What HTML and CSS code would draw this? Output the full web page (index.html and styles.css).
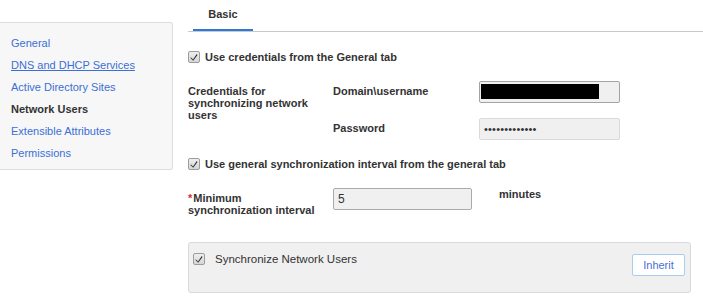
FILE: index.html
```html
<!DOCTYPE html>
<html lang="en">

<head>
    <meta charset="utf-8">
    <title>Network Users</title>
    <link rel="stylesheet" href="styles.css">
</head>

<body>

    <aside class="sidemenu">
        <a href="#" class="menulink">General</a>
        <a href="#" class="menulink understreg">DNS and DHCP Services</a>
        <a href="#" class="menulink">Active Directory Sites</a>
        <span class="menulink aktiv">Network Users</span>
        <a href="#" class="menulink">Extensible Attributes</a>
        <a href="#" class="menulink">Permissions</a>
    </aside>

    <main class="indhold">

        <div class="fanebar">
            <div class="fane">Basic</div>
        </div>

        <label class="tjek fed">
            <span class="boks"><svg viewBox="0 0 10 10"><path d="M1 5.3 L3.8 8 L8.4 1.4 L9.4 2.6 L4 9.6 L0.8 6.6 Z" /></svg></span>
            Use credentials from the General tab
        </label>

        <div class="formgrid">
            <div class="etiket fed toraekker">Credentials for synchronizing network users</div>
            <div class="etiket fed">Domain\username</div>
            <div class="felt aktivfelt"><span class="sort"></span></div>

            <div class="etiket fed">Password</div>
            <div class="felt kode">&bull;&bull;&bull;&bull;&bull;&bull;&bull;&bull;&bull;&bull;&bull;&bull;&bull;</div>
        </div>

        <label class="tjek fed anden">
            <span class="boks"><svg viewBox="0 0 10 10"><path d="M1 5.3 L3.8 8 L8.4 1.4 L9.4 2.6 L4 9.6 L0.8 6.6 Z" /></svg></span>
            Use general synchronization interval from the general tab
        </label>

        <div class="formgrid interval">
            <div class="etiket fed"><span class="krav">*</span>Minimum synchronization interval</div>
            <div class="felt tal">5</div>
            <div class="enhed fed">minutes</div>
        </div>

        <section class="panel">
            <label class="tjek">
                <span class="boks"><svg viewBox="0 0 10 10"><path d="M1 5.3 L3.8 8 L8.4 1.4 L9.4 2.6 L4 9.6 L0.8 6.6 Z" /></svg></span>
                <span class="paneltekst">Synchronize Network Users</span>
            </label>
            <button class="arv">Inherit</button>
        </section>

    </main>

</body>

</html>
```

FILE: styles.css
```css
body {
    margin: 0;
    display: flex;
    align-items: flex-start;
    font-family: "Liberation Sans", Arial, sans-serif;
    font-size: 11px;
    color: #333;
    background-color: white;
}

.fed {
    font-weight: bold;
}

/* menu til venstre */
.sidemenu {
    width: 172px;
    margin-top: 22px;
    padding: 9px 0 5px 0;
    display: flex;
    flex-direction: column;
    background-color: #f7f7f7;
    border: 1px solid #dcdcdc;
    border-left: none;
    border-radius: 0 3px 3px 0;
}

.menulink {
    display: block;
    line-height: 22px;
    padding-left: 11px;
    color: #3b6fd6;
    text-decoration: none;
}

.understreg {
    text-decoration: underline;
}

.aktiv {
    color: #333;
    font-weight: bold;
}

/* indhold */
.indhold {
    flex: 1;
    padding-left: 15px;
}

.fanebar {
    border-bottom: 1px solid #c9c9c9;
    display: flex;
}

.fane {
    width: 60px;
    margin-left: 5px;
    height: 29px;
    line-height: 29px;
    text-align: center;
    font-weight: bold;
    border-bottom: 2px solid #2f78d8;
}

.tjek {
    display: flex;
    align-items: center;
    gap: 5px;
    height: 16px;
    margin-top: 17px;
}

.anden {
    margin-top: 16px;
}

.boks {
    width: 10px;
    height: 10px;
    border: 1px solid #9c9c9c;
    border-radius: 2px;
    background: linear-gradient(#eeeeee, #d6d6d6);
    display: flex;
    align-items: center;
    justify-content: center;
}

.boks svg {
    width: 8px;
    height: 8px;
    fill: #2e2e2e;
}

.formgrid {
    display: grid;
    grid-template-columns: 145px 146px 141px;
    grid-template-rows: 22px 22px;
    row-gap: 15px;
    margin-top: 16px;
}

.toraekker {
    grid-row: span 2;
}

.etiket {
    padding-top: 4px;
    line-height: 12px;
    padding-right: 10px;
}

.felt {
    height: 20px;
    border: 1px solid #dadada;
    border-radius: 2px;
    background-color: #f0f0f0;
    box-sizing: content-box;
}

.aktivfelt {
    border-color: #a3a3a3;
    padding: 2px 0 0 1px;
    height: 18px;
}

.sort {
    display: block;
    width: 118px;
    height: 15px;
    background-color: black;
}

.kode {
    padding-left: 4px;
    line-height: 20px;
    font-size: 11px;
    letter-spacing: 0.2px;
}

.interval {
    grid-template-columns: 145px 139px auto;
    grid-template-rows: 22px;
}

.krav {
    color: #d0312d;
    margin-right: 1px;
}

.tal {
    border-color: #ababab;
    padding-left: 4px;
    line-height: 20px;
    font-size: 12px;
}

.enhed {
    padding-left: 27px;
    line-height: 12px;
}

.panel {
    width: 492px;
    margin-top: 32px;
    height: 39px;
    padding: 6px 5px 4px 4px;
    display: flex;
    justify-content: space-between;
    align-items: flex-start;
    background-color: #f0f0f0;
    border: 1px solid #dadada;
    border-radius: 3px;
}

.panel .tjek {
    margin-top: 2px;
    gap: 10px;
}

.paneltekst {
    font-size: 11.5px;
}

.arv {
    margin-top: 5px;
    width: 53px;
    height: 22px;
    padding: 0;
    font-family: "Liberation Sans", Arial, sans-serif;
    font-size: 11px;
    color: #4a6fd4;
    background-color: white;
    border: 1px solid #a9cdf2;
    border-radius: 2px;
}
```
